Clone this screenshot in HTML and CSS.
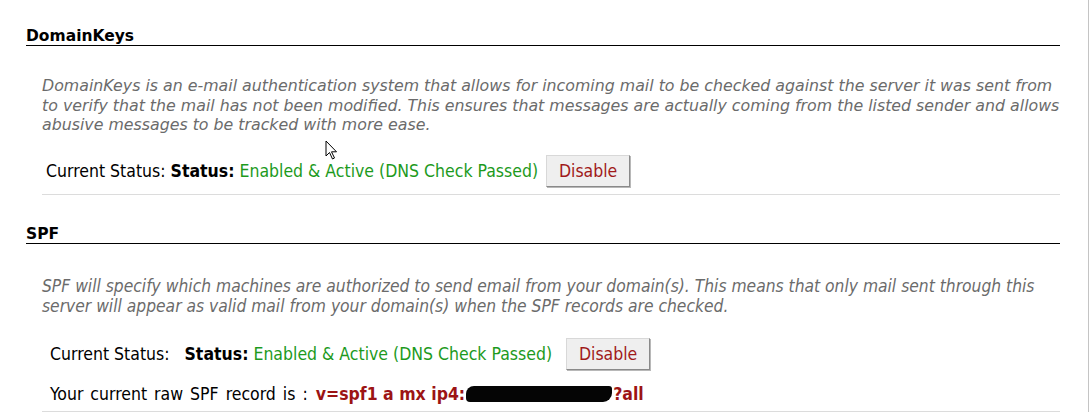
FILE: index.html
```html
<!DOCTYPE html>
<html>
<head>
<meta charset="utf-8">
<link rel="stylesheet" href="styles.css">
</head>
<body>
<div class="page">
  <section class="block">
    <h2 class="title">DomainKeys</h2>
    <p class="desc dk">DomainKeys is an e-mail authentication system that allows for incoming mail to be checked against the server it was sent from to verify that the mail has not been modified. This ensures that messages are actually coming from the listed sender and allows abusive messages to be tracked with more ease.</p>
    <div class="panel">
      <div class="row status-row">
        <span class="label">Current Status: <b>Status:</b> <span class="ok">Enabled &amp; Active (DNS Check Passed)</span></span>
        <button class="btn">Disable</button>
      </div>
    </div>
  </section>
  <section class="block spf">
    <h2 class="title">SPF</h2>
    <p class="desc cond">SPF will specify which machines are authorized to send email from your domain(s). This means that only mail sent through this server will appear as valid mail from your domain(s) when the SPF records are checked.</p>
    <div class="panel">
      <div class="row status-row two">
        <span class="label">Current Status: &nbsp; <b>Status:</b> <span class="ok">Enabled &amp; Active (DNS Check Passed)</span></span>
        <button class="btn">Disable</button>
      </div>
      <div class="row raw"><span class="raw-label">Your current raw SPF record is :</span> <b class="rec">v=spf1 a mx ip4:<span class="redact"></span>?all</b></div>
    </div>
  </section>
  <svg class="cursor" width="14" height="20" viewBox="0 0 14 20"><path d="M1 1 L1 16 L4.5 12.5 L7.5 19 L9.5 18 L6.5 11.8 L11.5 11.8 Z" fill="#fff" stroke="#000" stroke-width="1" stroke-linejoin="round"/></svg>
</div>
</body>
</html>
```
FILE: styles.css
```css
html, body { margin: 0; padding: 0; background: #fff; }
.page {
  position: relative;
  width: 1034px;
  height: 412px;
  padding: 0 28px 0 26px;
  border-right: 1px solid #c4c4c4;
  overflow: hidden;
  font-family: "DejaVu Sans", Verdana, sans-serif;
  color: #000;
}
.block { margin: 0; }
.title {
  margin: 27px 0 0 0;
  font-size: 15.5px;
  line-height: 18px;
  font-weight: bold;
  border-bottom: 1px solid #000;
}
.spf .title { margin-top: 30px; }
.desc {
  margin: 30px 0 0 16px;
  font-style: italic;
  color: #6b6b6b;
  font-size: 15.8px;
  line-height: 19.5px;
}
.desc.cond {
  font-family: "DejaVu Sans Condensed", "DejaVu Sans", sans-serif;
  font-stretch: condensed;
  font-size: 17.3px;
  line-height: 20px;
  margin-top: 32px;
}
.panel {
  margin: 0 0 0 16px;
  border-bottom: 1px solid #dcdcdc;
  font-family: "DejaVu Sans Condensed", "DejaVu Sans", sans-serif;
  font-stretch: condensed;
  font-size: 17.5px;
}
.row { display: flex; align-items: center; }
.status-row { padding: 20px 0 7px 4px; gap: 8px; }
.status-row.two { padding: 22px 0 0 8px; gap: 14px; }
.label b { font-weight: bold; }
.ok { color: #1d9a1d; }
.btn {
  width: 84px;
  height: 32px;
  background: #efefef;
  border: 1px solid #d8d8d8;
  border-right-color: #8a8a8a;
  border-bottom-color: #8a8a8a;
  box-shadow: 1px 1px 0 #b8b8b8;
  color: #a01a1a;
  font-family: "DejaVu Sans Condensed", "DejaVu Sans", sans-serif;
  font-stretch: condensed;
  font-size: 17.5px;
  padding: 0;
}
.raw { padding: 14px 0 7px 8px; }
.raw-label { word-spacing: 2px; }
.rec { color: #9c1414; font-weight: bold; margin-left: 8px; display: inline-flex; align-items: center; }
.redact {
  display: inline-block;
  width: 146px;
  height: 16px;
  background: #050505;
  border-radius: 8px 3px 9px 4px;
  margin: 0 1px;
}
.cursor { position: absolute; left: 325px; top: 140px; }
```
